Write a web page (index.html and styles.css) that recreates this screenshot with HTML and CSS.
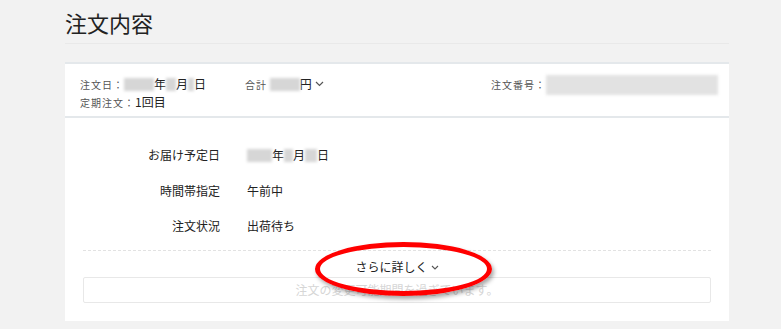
FILE: index.html
```html
<!DOCTYPE html>
<html lang="ja">
<head>
  <meta charset="UTF-8">
  <title>注文内容</title>
  <link rel="stylesheet" href="styles.css">
</head>
<body>
  <div class="page">
    <h1>注文内容</h1>
    <div class="card">
      <!-- ヘッダー -->
      <div class="card-head">
        <div class="col col-date">
          <div><span class="lbl">注文日：</span><span class="blur w30"></span>年<span class="blur w10"></span>月<span class="blur w6"></span>日</div>
          <div><span class="lbl">定期注文：</span>1回目</div>
        </div>
        <div class="col col-total">
          <span class="lbl">合計</span> <span class="blur w30"></span>円<svg class="chev" width="9" height="6" viewBox="0 0 9 6"><path d="M1 1l3.5 3.5L8 1" fill="none" stroke="#555" stroke-width="1.2"/></svg>
        </div>
        <div class="col col-no">
          <span class="lbl">注文番号：</span><span class="blur w172"></span>
        </div>
      </div>
      <!-- 詳細 -->
      <div class="card-body">
        <div class="row">
          <div class="row-lbl">お届け予定日</div>
          <div class="row-val"><span class="blur w25"></span>年<span class="blur w9"></span>月<span class="blur w12"></span>日</div>
        </div>
        <div class="row">
          <div class="row-lbl">時間帯指定</div>
          <div class="row-val">午前中</div>
        </div>
        <div class="row">
          <div class="row-lbl">注文状況</div>
          <div class="row-val">出荷待ち</div>
        </div>
        <div class="more">
          <span>さらに詳しく<svg class="chev" width="8" height="5" viewBox="0 0 8 5"><path d="M1 1l3 3 3-3" fill="none" stroke="#555" stroke-width="1.1"/></svg></span>
          <div class="mark"></div>
        </div>
        <div class="notice">注文の変更可能期間を過ぎています。</div>
      </div>
    </div>
  </div>
</body>
</html>
```

FILE: styles.css
```css
body {
  margin: 0;
  background-color: #f2f2f2;
  color: #222;
  font-family: "Noto Sans CJK JP", "Noto Sans", sans-serif;
}

.page {
  width: 664px;
  margin-left: 65px;
}

h1 {
  margin: 0;
  padding: 8px 0 6px;
  font-size: 22px;
  font-weight: normal;
  line-height: 29px;
  border-bottom: 1px solid #e9e9e9;
}

.card {
  margin-top: 18px;
  background-color: #fff;
  border-top: 2px solid #e4e8eb;
}

/* ヘッダー */
.card-head {
  display: flex;
  padding: 11px 11px 5px 15px;
  border-bottom: 2px solid #e4e8eb;
  font-size: 12px;
  line-height: 17px;
}

.col-date { width: 165px; }
.col-total { width: 150px; }
.col-no { flex: 1; text-align: right; }

.lbl {
  font-size: 10px;
  color: #555;
  letter-spacing: 1px;
}

.chev {
  margin-left: 3px;
  vertical-align: 2px;
}

.blur {
  display: inline-block;
  height: 13px;
  vertical-align: -2px;
  background-color: #d6d6d6;
  filter: blur(1.5px);
}

.w6 { width: 6px; }
.w9 { width: 9px; }
.w10 { width: 10px; }
.w12 { width: 12px; }
.w25 { width: 25px; }
.w30 { width: 30px; }
.w172 {
  width: 172px;
  height: 20px;
  vertical-align: -6px;
  background-color: #e2e2e2;
}

/* 詳細 */
.card-body {
  padding: 19px 18px 18px;
  font-size: 12px;
}

.row {
  display: flex;
  height: 35.5px;
  line-height: 35px;
}

.row-lbl {
  width: 137px;
  text-align: right;
}

.row-val {
  margin-left: 27px;
}

.more {
  position: relative;
  margin-top: 6px;
  padding-top: 6px;
  border-top: 1px dashed #e2e2e2;
  text-align: center;
  line-height: 20px;
}

.mark {
  position: absolute;
  left: 232px;
  top: -9px;
  width: 167px;
  height: 44px;
  border: 5px solid #ff0000;
  border-radius: 50%;
  box-shadow: 2px 3px 4px rgba(0, 0, 0, 0.35);
}

.notice {
  height: 24px;
  line-height: 24px;
  border: 1px solid #e8e8e8;
  border-radius: 2px;
  text-align: center;
  color: #d6d6d6;
  font-size: 12px;
}
```
